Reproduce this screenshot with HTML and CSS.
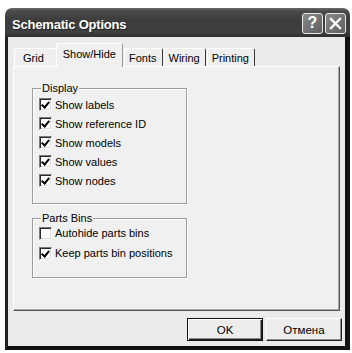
FILE: index.html
```html
<!DOCTYPE html>
<html>
<head>
<meta charset="utf-8">
<link rel="stylesheet" href="styles.css">
</head>
<body>
<div class="window">
  <div class="titlebar">
    <span class="title">Schematic Options</span>
    <div class="tbtns">
      <span class="tbtn help">?</span>
      <span class="tbtn close"><svg width="13" height="13" viewBox="0 0 13 13"><path d="M2 2 L11 11 M11 2 L2 11" stroke="#fff" stroke-width="2.4" stroke-linecap="square"/></svg></span>
    </div>
  </div>
  <div class="client">
    <div class="tabs">
      <div class="tab first">Grid</div>
      <div class="tab active">Show/Hide</div>
      <div class="tab">Fonts</div>
      <div class="tab">Wiring</div>
      <div class="tab">Printing</div>
    </div>
    <div class="panel">
      <div class="group display">
        <span class="legend">Display</span>
        <div class="row"><span class="cb checked"></span><span>Show labels</span></div>
        <div class="row"><span class="cb checked"></span><span>Show reference ID</span></div>
        <div class="row"><span class="cb checked"></span><span>Show models</span></div>
        <div class="row"><span class="cb checked"></span><span>Show values</span></div>
        <div class="row"><span class="cb checked"></span><span>Show nodes</span></div>
      </div>
      <div class="group bins">
        <span class="legend">Parts Bins</span>
        <div class="row"><span class="cb"></span><span>Autohide parts bins</span></div>
        <div class="row"><span class="cb checked"></span><span>Keep parts bin positions</span></div>
      </div>
    </div>
    <div class="actions">
      <div class="btn default"><span class="btn-inner">OK</span></div>
      <div class="btn"><span class="btn-inner">Отмена</span></div>
    </div>
  </div>
</div>
</body>
</html>
```
FILE: styles.css
```css
html, body {
  margin: 0;
  padding: 0;
  background: #fff;
}
body {
  width: 352px;
  height: 353px;
  overflow: hidden;
  font-family: "Liberation Sans", Arial, sans-serif;
  font-size: 11px;
  color: #000;
}
.window {
  margin: 8px 0 0 5px;
  width: 345px;
  height: 342px;
  display: flex;
  flex-direction: column;
}
.titlebar {
  height: 29px;
  flex: none;
  border-radius: 7px 7px 0 0;
  background: linear-gradient(#6a6a6a 0px, #4a4a4a 3px, #3c3c3c 12px, #404040 24px, #2e2e2e 29px);
  display: flex;
  align-items: center;
  padding: 0 4px 0 7px;
}
.title {
  color: #fff;
  font-weight: bold;
  font-size: 13px;
  letter-spacing: -0.2px;
  flex: 1;
  padding-top: 3px;
  text-shadow: 1px 1px 0 #222;
}
.tbtns {
  display: flex;
  gap: 2px;
  padding-top: 1px;
}
.tbtn {
  width: 19px;
  height: 19px;
  border: 1px solid #e8e8e8;
  border-radius: 3px;
  background: linear-gradient(135deg, #8a8a8a, #5e5e5e);
  color: #fff;
  font-weight: bold;
  font-size: 16px;
  display: flex;
  align-items: center;
  justify-content: center;
  line-height: 1;
}
.client {
  flex: 1;
  background: #ebebeb;
  border-left: 3px solid #222;
  border-right: 5px solid #111;
  border-bottom: 4px solid #111;
  display: flex;
  flex-direction: column;
  padding: 6px 0 0 5px;
}
.tabs {
  display: flex;
  align-items: flex-end;
  height: 23px;
  position: relative;
  z-index: 1;
}
.tab {
  height: 17px;
  padding: 0 5px 0 4px;
  display: flex;
  align-items: center;
  background: #efefef;
  border-top: 1px solid #fff;
  border-left: 1px solid #fff;
  border-right: 1px solid #3a3a3a;
  border-radius: 2px 2px 0 0;
}
.tab.first {
  padding: 0 12px 0 8px;
  border-right: none;
  margin-left: 1px;
}
.tab.active {
  height: 23px;
  padding: 0 6px 0 6px;
  margin-bottom: -1px;
  background: #f0f0f0;
  border-right: 1px solid #9a9a9a;
  align-items: flex-start;
  line-height: 20px;
}
.tab + .tab:not(.active) {
  margin-left: 1px;
}
.panel {
  width: 307px;
  height: 222px;
  background: #f0f0f0;
  border-top: 1px solid #fff;
  border-left: 1px solid #fff;
  border-right: 1px solid #555;
  border-bottom: 1px solid #555;
  box-shadow: inset -1px -1px 0 #a8a8a8;
  padding: 21px 0 0 18px;
  display: flex;
  flex-direction: column;
}
.group {
  position: relative;
  width: 153px;
  border: 1px solid #9c9c9c;
  box-shadow: 1px 1px 0 #fff, inset 1px 1px 0 #fff;
}
.display {
  padding-top: 6px;
  height: 108px;
}
.bins {
  margin-top: 14px;
  padding-top: 4px;
  height: 54px;
}
.legend {
  position: absolute;
  top: -8px;
  left: 8px;
  padding: 0 1px;
  background: #f0f0f0;
  line-height: 14px;
}
.row {
  display: flex;
  align-items: center;
  height: 19px;
  padding-left: 6px;
  gap: 3px;
}
.bins .row {
  height: 20px;
}
.cb {
  width: 9px;
  height: 9px;
  background: #fff;
  border-top: 1px solid #7a7a7a;
  border-left: 1px solid #7a7a7a;
  border-right: 1px solid #fff;
  border-bottom: 1px solid #fff;
  box-shadow: inset 1px 1px 0 #2a2a2a, inset -1px -1px 0 #dcdcdc;
  padding: 1px;
  position: relative;
}
.cb.checked::after {
  content: "";
  position: absolute;
  left: 3px;
  top: 1px;
  width: 3px;
  height: 6px;
  border-right: 2px solid #000;
  border-bottom: 2px solid #000;
  transform: rotate(40deg);
}
.actions {
  display: flex;
  justify-content: flex-end;
  gap: 3px;
  padding: 7px 3px 0 0;
}
.btn {
  width: 76px;
  height: 23px;
  box-sizing: border-box;
  background: #ededed;
  border-top: 1px solid #fff;
  border-left: 1px solid #fff;
  border-right: 1px solid #222;
  border-bottom: 1px solid #222;
  box-shadow: inset -1px -1px 0 #8a8a8a;
  display: flex;
}
.btn.default {
  border: 1px solid #111;
  box-shadow: inset 1px 1px 0 #fff, inset -1px -1px 0 #222, inset -2px -2px 0 #8a8a8a;
}
.btn-inner {
  flex: 1;
  display: flex;
  align-items: center;
  justify-content: center;
  font-size: 11.5px;
}
```
